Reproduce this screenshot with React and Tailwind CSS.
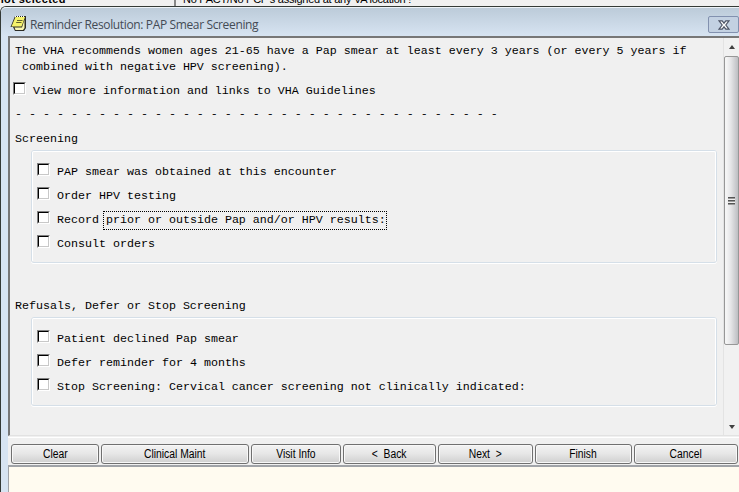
const mono = "font-['Liberation_Mono','DejaVu_Sans_Mono',monospace]";

function Box() {
  return (
    <span className="block h-[13px] w-[13px] shrink-0 border border-t-[#808080] border-l-[#808080] border-r-white border-b-white">
      <span className="block h-[11px] w-[11px] border border-t-black border-l-black border-r-[#c8c8c8] border-b-[#c8c8c8] bg-white" />
    </span>
  );
}

function Item({ children }) {
  return (
    <div className="flex h-6 pl-[4px]">
      <Box />
      <span className="ml-[7px] mt-[2px] flex leading-[15px]">{children}</span>
    </div>
  );
}

function Group({ className, children }) {
  return (
    <div className={`ml-[16px] w-[686px] rounded-[3px] border border-[#d5dfe8] shadow-[0_1px_0_#fff] ${className}`}>
      <div className="h-full rounded-[2px] border border-t-white border-l-white border-r-white border-b-transparent pt-[11px]">
        {children}
      </div>
    </div>
  );
}

function PushButton({ width, children }) {
  return (
    <button
      className={`h-5 shrink-0 rounded-[3px] border border-[#707070] bg-linear-to-b from-[#f3f3f3] from-0% via-[#e6e6e6] via-50% to-[#cfcfcf] to-100% text-center leading-[18px] whitespace-pre shadow-[inset_0_0_0_1px_#f8f8f8] ${width}`}
    >
      <span className="inline-block scale-x-[0.86]">{children}</span>
    </button>
  );
}

function NoteIcon() {
  return (
    <svg className="ml-[1px] block" width="17" height="17" viewBox="0 0 17 17">
      <path d="M5 1H16V13L14 16H5L3 12H0.5Z" fill="#2c2c26" />
      <path d="M5.5 2H15L11.5 11.5H1.5Z" fill="#f5f36c" />
      <path d="M14.5 4.5V13L13 15H5.5L4.5 12.5H12Z" fill="#f8f6b0" />
      <path d="M7 5.5H12.5M6.2 7.5H11.5" stroke="#62622e" strokeWidth="1" />
      <path d="M5 1.5H15" stroke="#fff" strokeDasharray="1 1" />
    </svg>
  );
}

export default function App() {
  return (
    <div className="flex h-[492px] w-[739px] flex-col overflow-hidden bg-[#f0f0f0] font-['Liberation_Sans',Arial,sans-serif] text-[12px] text-black">
      <div className="flex h-[6px] shrink-0 overflow-hidden text-[11px] leading-[12px] whitespace-nowrap">
        <div className="w-[176px] shrink-0 border-r-2 border-[#888] font-bold tracking-[0.4px]"><span className="-ml-[3px] -mt-[7px] block">not selected</span></div>
        <div className="-mt-[7px] ml-[7px] tracking-[-0.25px]">No PACT/No PCP's assigned at any VA location !</div>
      </div>
      <div className="flex min-h-0 flex-1 flex-col rounded-tl-[6px] border-t border-l border-[#343a36] bg-[#d7e4f2]">
        <div className="flex h-[29px] shrink-0 items-start rounded-tl-[5px] border-t border-[#edf3f8] bg-linear-to-b from-[#bccbd9] to-[#d7e4f2] pl-2">
          <div className="pt-[7px]"><NoteIcon /></div>
          <span className="ml-[3px] mt-[8px] font-['Open_Sans','Noto_Sans',sans-serif] text-[12px] leading-[18px] tracking-[-0.36px] whitespace-nowrap text-[#444b55]">Reminder Resolution: PAP Smear Screening</span>
          <div className="mt-[8px] ml-auto flex h-[17px] w-[31px] items-center justify-center rounded-[2px] border border-[#8291af] bg-[#c3d1e2]">
            <svg width="12" height="10" viewBox="0 0 13 11">
              <path d="M1 1H4.5L6.5 3.5L8.5 1H12L8.5 5.5L12 10H8.5L6.5 7.5L4.5 10H1L4.5 5.5Z" fill="#fff" stroke="#4c5365" strokeWidth="1.3" />
            </svg>
          </div>
        </div>
        <div className="ml-[7px] flex min-h-0 flex-1 flex-col bg-[#f0f0f0]">
          <div className="flex h-[400px] shrink-0 border-t-2 border-l-2 border-[#777] border-b border-b-[#e2e2e2]">
            <main className={`w-[713px] pl-[5px] text-[11.667px] leading-4 whitespace-pre ${mono}`}>
              <div className="pt-[5px]">The VHA recommends women ages 21-65 have a Pap smear at least every 3 years (or every 5 years if</div>
              <div> combined with negative HPV screening).</div>
              <div className="mt-[7px] flex h-[15px] -translate-x-[2px]"><Box /><span className="ml-[7px] mt-[1px]">View more information and links to VHA Guidelines</span></div>
              <div className="mt-[9px]">- - - - - - - - - - - - - - - - - - - - - - - - - - - - - - - - - - -</div>
              <div className="mt-[9px]">Screening</div>
              <Group className="mt-[3px] h-[113px]">
                <Item>PAP smear was obtained at this encounter</Item>
                <Item>Order HPV testing</Item>
                <Item>
                  <span>Record </span>
                  <span className="-mt-[2px] -ml-[3px] h-[19px] border border-dotted border-black pt-[1px] pl-[2px]">prior or outside Pap and/or HPV results:</span>
                </Item>
                <Item>Consult orders</Item>
              </Group>
              <div className="mt-[35px]">Refusals, Defer or Stop Screening</div>
              <Group className="mt-[3px] h-[89px]">
                <Item>Patient declined Pap smear</Item>
                <Item>Defer reminder for 4 months</Item>
                <Item>Stop Screening: Cervical cancer screening not clinically indicated:</Item>
              </Group>
            </main>
            <aside className="flex w-4 flex-col items-center border-l border-[#e3e3e3] bg-[#f1f1f1]">
              <svg className="my-[7px] shrink-0" width="8" height="4" viewBox="0 0 8 4"><path d="M4 0L7 4H1Z" fill="#404040" /></svg>
              <div className="flex h-[289px] w-[15px] shrink-0 items-center justify-center rounded-[2px] border border-[#979797] bg-linear-to-r from-[#f5f5f5] from-10% via-[#e5e5e7] via-45% to-[#bdbec2]">
                <div className="mr-[1px] h-2 w-[7px] bg-[repeating-linear-gradient(#555_0_1px,#999_1px_2px,#eee_2px_3px)]" />
              </div>
              <svg className="mt-auto mb-[6px] shrink-0" width="8" height="4" viewBox="0 0 8 4"><path d="M1 0H7L4 4Z" fill="#404040" /></svg>
            </aside>
          </div>
          <div className="mt-[1px] h-[28px] shrink-0 border-t border-white pt-[6px] pl-[3px]">
            <div className="flex gap-[2px]">
              <PushButton width="w-[88px]">Clear</PushButton>
              <PushButton width="w-[148px]">Clinical Maint</PushButton>
              <PushButton width="w-[90px]">Visit Info</PushButton>
              <PushButton width="w-[93px]">{"<  Back"}</PushButton>
              <PushButton width="w-[95px]">{"Next  >"}</PushButton>
              <PushButton width="w-[97px]">Finish</PushButton>
              <PushButton width="w-[104px]">Cancel</PushButton>
            </div>
          </div>
          <div className="flex-1 border-t-2 border-l border-[#a0a3a8] bg-[#fffbf0]" />
        </div>
      </div>
    </div>
  );
}
